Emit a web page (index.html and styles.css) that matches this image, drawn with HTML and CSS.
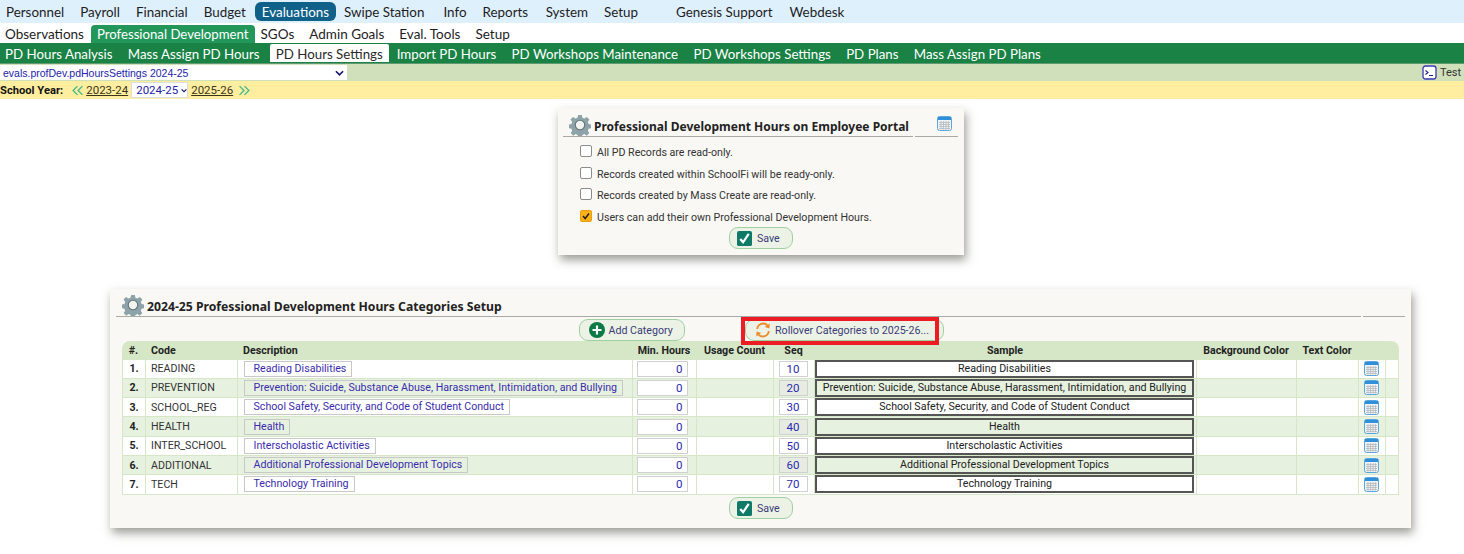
FILE: index.html
```html
<!DOCTYPE html>
<html lang="en">
<head>
<meta charset="utf-8">
<title>PD Hours Settings</title>
<link rel="stylesheet" href="styles.css">
</head>
<body>
<svg class="defs" width="0" height="0">
  <symbol id="gear" viewBox="0 0 24 24">
    <path fill="#8ea3a9" d="M10 1h4l.6 3 2.200.9 2.600-1.700 2.800 2.800-1.700 2.600.9 2.200 3 .6v4l-3 .6-.9 2.200 1.700 2.600-2.800 2.800-2.600-1.700-2.200.9-.6 3h-4l-.6-3-2.200-.9-2.600 1.700-2.800-2.800 1.700-2.600-.9-2.200-3-.6v-4l3-.6.9-2.200L1.600 6l2.800-2.800 2.600 1.700 2.200-.9z"/>
    <circle cx="12" cy="12" r="5.200" fill="#f3f3ef" stroke="#66777c" stroke-width="1.300"/>
  </symbol>
  <symbol id="cal" viewBox="0 0 15 15">
    <rect x=".5" y=".5" width="14" height="14" rx="2" fill="#eef3f6" stroke="#5aa5dc"/>
    <path fill="#2f8fd8" d="M1 1h13v3H1z"/>
    <path stroke="#b5b9bc" stroke-width=".8" fill="none" d="M2 6.500h11M2 8.500h11M2 10.500h11M2 12.500h11M4 5v8.500M6.500 5v8.500M9 5v8.500M11.500 5v8.500"/>
  </symbol>
  <symbol id="check" viewBox="0 0 16 16">
    <rect width="16" height="16" rx="2" fill="#0f7a68"/>
    <path d="M3.500 8.500l3 3.500 6-9" fill="none" stroke="#fff" stroke-width="2.400"/>
  </symbol>
  <symbol id="dbl-left" viewBox="0 0 10 10">
    <path d="M5 1L1 5l4 4M9.500 1l-4 4 4 4" fill="none" stroke="#41b88c" stroke-width="1.200"/>
  </symbol>
  <symbol id="dbl-right" viewBox="0 0 10 10">
    <path d="M.5 1l4 4-4 4M5 1l4 4-4 4" fill="none" stroke="#41b88c" stroke-width="1.200"/>
  </symbol>
</svg>

<nav class="bar bar-top">
  <a class="item">Personnel</a><a class="item">Payroll</a><a class="item">Financial</a><a class="item">Budget</a><a class="item item-on">Evaluations</a><a class="item">Swipe Station</a><a class="item">Info</a><a class="item">Reports</a><a class="item">System</a><a class="item">Setup</a><a class="item item-far">Genesis Support</a><a class="item">Webdesk</a>
</nav>
<nav class="bar bar-sub">
  <a class="sub">Observations</a><a class="sub sub-on">Professional Development</a><a class="sub">SGOs</a><a class="sub">Admin Goals</a><a class="sub">Eval. Tools</a><a class="sub">Setup</a>
</nav>
<nav class="bar bar-tabs">
  <a class="tab">PD Hours Analysis</a><a class="tab">Mass Assign PD Hours</a><a class="tab tab-on">PD Hours Settings</a><a class="tab">Import PD Hours</a><a class="tab">PD Workshops Maintenance</a><a class="tab">PD Workshops Settings</a><a class="tab">PD Plans</a><a class="tab">Mass Assign PD Plans</a>
</nav>
<div class="bar bar-view">
  <div class="view-select"><span>evals.profDev.pdHoursSettings 2024-25</span><svg class="chev" viewBox="0 0 10 6" width="9" height="6"><path d="M1 1l4 4 4-4" fill="none" stroke="#14146e" stroke-width="1.800"/></svg></div>
  <div class="test">
    <svg viewBox="0 0 15 15" width="15" height="15"><rect x="1" y="1" width="13" height="13" rx="2.500" fill="#fff" stroke="#3a3ab4" stroke-width="1.300"/><path d="M3.500 5.500l2.500 2-2.500 2M7 10.500h4" fill="none" stroke="#22227e" stroke-width="1.100"/></svg>
    <span>Test</span>
  </div>
</div>
<div class="bar bar-year">
  <b class="year-label">School Year:</b>
  <svg class="arrows"><use href="#dbl-left"/></svg>
  <a class="year-link">2023-24</a>
  <div class="year-select"><span>2024-25</span><svg class="chev" viewBox="0 0 10 6" width="8" height="5"><path d="M1 1l4 4 4-4" fill="none" stroke="#14146e" stroke-width="1.800"/></svg></div>
  <a class="year-link">2025-26</a>
  <svg class="arrows arrows-next"><use href="#dbl-right"/></svg>
</div>

<main class="page">
  <section class="panel panel-portal">
    <header class="panel-head">
      <div class="head-main"><svg class="gear"><use href="#gear"/></svg><h2>Professional Development Hours on Employee Portal</h2></div>
      <div class="head-side"><svg class="cal-head"><use href="#cal"/></svg></div>
    </header>
    <ul class="opts">
      <li><span class="box"></span>All PD Records are read-only.</li>
      <li><span class="box"></span>Records created within SchoolFi will be ready-only.</li>
      <li><span class="box"></span>Records created by Mass Create are read-only.</li>
      <li><span class="box box-on"><svg viewBox="0 0 12 12" width="12" height="12"><path d="M3 6l2.200 2.500L9 3.500" fill="none" stroke="#222" stroke-width="1.500"/></svg></span>Users can add their own Professional Development Hours.</li>
    </ul>
    <div class="actions"><button class="btn btn-save"><svg class="ico"><use href="#check"/></svg>Save</button></div>
  </section>

  <section class="panel panel-cats">
    <header class="panel-head">
      <div class="head-main"><svg class="gear"><use href="#gear"/></svg><h2>2024-25 Professional Development Hours Categories Setup</h2></div>
      <div class="head-side"></div>
    </header>
    <div class="tools">
      <button class="btn btn-add"><svg class="ico" viewBox="0 0 16 16"><circle cx="8" cy="8" r="8" fill="#0c7a45"/><path d="M8 3.500v9M3.500 8h9" stroke="#fff" stroke-width="2.200"/></svg>Add Category</button>
      <button class="btn btn-roll"><svg class="ico ico-roll" viewBox="0 0 16 16"><path d="M2.200 7A6 6 0 0 1 12.500 3.400" fill="none" stroke="#ee8a2a" stroke-width="1.900"/><path d="M14.800 1.500l-.4 5-4.600-1.600z" fill="#ee8a2a"/><path d="M13.800 9A6 6 0 0 1 3.500 12.600" fill="none" stroke="#ee8a2a" stroke-width="1.900"/><path d="M1.200 14.500l.4-5 4.600 1.600z" fill="#ee8a2a"/></svg>Rollover Categories to 2025-26...<span class="mark"></span></button>
    </div>
    <table class="grid">
      <colgroup><col class="c1"><col class="c2"><col class="c3"><col class="c4"><col class="c5"><col class="c6"><col class="c7"><col class="c8"><col class="c9"><col class="c10"><col class="c11"></colgroup>
      <thead>
        <tr><th class="num">#.</th><th>Code</th><th>Description</th><th class="mid">Min. Hours</th><th class="mid">Usage Count</th><th class="mid">Seq</th><th class="mid">Sample</th><th class="mid">Background Color</th><th class="mid">Text Color</th><th></th><th></th></tr>
      </thead>
      <tbody>
        <tr><td class="num">1.</td><td>READING</td><td><a class="desc">Reading Disabilities</a></td><td><span class="inp inp-hours">0</span></td><td></td><td><span class="inp inp-seq">10</span></td><td><div class="sample">Reading Disabilities</div></td><td></td><td></td><td class="mid"><svg class="cal"><use href="#cal"/></svg></td><td></td></tr>
        <tr><td class="num">2.</td><td>PREVENTION</td><td><a class="desc">Prevention: Suicide, Substance Abuse, Harassment, Intimidation, and Bullying</a></td><td><span class="inp inp-hours">0</span></td><td></td><td><span class="inp inp-seq">20</span></td><td><div class="sample">Prevention: Suicide, Substance Abuse, Harassment, Intimidation, and Bullying</div></td><td></td><td></td><td class="mid"><svg class="cal"><use href="#cal"/></svg></td><td></td></tr>
        <tr><td class="num">3.</td><td>SCHOOL_REG</td><td><a class="desc">School Safety, Security, and Code of Student Conduct</a></td><td><span class="inp inp-hours">0</span></td><td></td><td><span class="inp inp-seq">30</span></td><td><div class="sample">School Safety, Security, and Code of Student Conduct</div></td><td></td><td></td><td class="mid"><svg class="cal"><use href="#cal"/></svg></td><td></td></tr>
        <tr><td class="num">4.</td><td>HEALTH</td><td><a class="desc">Health</a></td><td><span class="inp inp-hours">0</span></td><td></td><td><span class="inp inp-seq">40</span></td><td><div class="sample">Health</div></td><td></td><td></td><td class="mid"><svg class="cal"><use href="#cal"/></svg></td><td></td></tr>
        <tr><td class="num">5.</td><td>INTER_SCHOOL</td><td><a class="desc">Interscholastic Activities</a></td><td><span class="inp inp-hours">0</span></td><td></td><td><span class="inp inp-seq">50</span></td><td><div class="sample">Interscholastic Activities</div></td><td></td><td></td><td class="mid"><svg class="cal"><use href="#cal"/></svg></td><td></td></tr>
        <tr><td class="num">6.</td><td>ADDITIONAL</td><td><a class="desc">Additional Professional Development Topics</a></td><td><span class="inp inp-hours">0</span></td><td></td><td><span class="inp inp-seq">60</span></td><td><div class="sample">Additional Professional Development Topics</div></td><td></td><td></td><td class="mid"><svg class="cal"><use href="#cal"/></svg></td><td></td></tr>
        <tr><td class="num">7.</td><td>TECH</td><td><a class="desc">Technology Training</a></td><td><span class="inp inp-hours">0</span></td><td></td><td><span class="inp inp-seq">70</span></td><td><div class="sample">Technology Training</div></td><td></td><td></td><td class="mid"><svg class="cal"><use href="#cal"/></svg></td><td></td></tr>
      </tbody>
    </table>
    <div class="actions actions-cats"><button class="btn btn-save"><svg class="ico"><use href="#check"/></svg>Save</button></div>
  </section>
</main>
</body>
</html>
```
FILE: styles.css
```css
* { box-sizing: border-box; }
html, body { margin: 0; padding: 0; background: #fff; overflow: hidden; }
body { width: 1464px; height: 554px; font-family: "Roboto", "Liberation Sans", sans-serif; color: #222; font-size: 10.650px; }
.defs { position: absolute; }
h2 { margin: 0; }
a { display: inline-block; }

.bar { display: flex; align-items: center; white-space: nowrap; }

.bar-top { height: 23px; background: #dff0fd; font-family: "Lato", sans-serif; font-size: 13.400px; color: #1d1d1d; }
.item { padding: 0 6px; margin-right: 4px; line-height: 20px; height: 19px; }
.item:nth-child(6) { margin-right: 7px; }
.item:nth-child(8) { margin-right: 5.500px; }
.item:nth-child(11) { margin-right: 5px; }
.item-on { background: #0f6189; color: #fff; border-radius: 6px; padding: 0 7px; margin-right: 2px; margin-left: -1px; }
.item-far { margin-left: 22px; }

.bar-sub { height: 20px; font-family: "Lato", sans-serif; font-size: 13.500px; color: #1d1d1d; align-items: flex-end; }
.sub { padding: 0 5px; margin-right: 5px; height: 18px; line-height: 18px; }
.sub:first-child { margin-right: 2px; }
.sub-on { background: #23975a; color: #fff; border-radius: 4px 4px 0 0; padding: 0 6px; margin-right: 1px; font-size: 13.200px; }

.bar-tabs { height: 21px; background: #1a8245; color: #fff; font-family: "Lato", sans-serif; font-size: 13.300px; align-items: flex-end; padding-bottom: 1px; border-bottom: 1px solid #5f9a70; }
.tab { padding: 0 5px; margin-right: 5.300px; height: 18px; line-height: 20px; }
.tab-on { background: #fff; color: #2a2a2a; border-radius: 2px 2px 0 0; padding: 0 6px; margin-right: 3px; }

.bar-view { height: 17px; background: #cfe0bb; justify-content: space-between; overflow: hidden; }
.view-select { width: 347px; height: 15px; background: #fff; display: flex; align-items: center; justify-content: space-between; padding: 0 3px; color: #2222aa; font-family: "Liberation Sans", sans-serif; font-size: 10.500px; }
.test { width: 42px; flex: none; display: flex; align-items: center; gap: 3px; color: #333; font-size: 11px; }
.test svg { flex: none; }

.bar-year { height: 18px; background: #ffee9f; gap: 3px; font-size: 11.500px; }
.year-label { color: #111; margin-right: 6px; font-size: 11.200px; }
.arrows { width: 11px; height: 11px; }
.arrows-next { margin-left: 3px; }
.year-link { color: #3a3418; text-decoration: underline; }
.year-select { width: 57px; height: 16px; background: #fff; border: 1px solid #ddd; display: flex; align-items: center; gap: 3px; padding-left: 4px; color: #2222aa; }

.page { display: flex; flex-direction: column; align-items: flex-start; }
.panel { background: #f9f8f4; box-shadow: 2px 5px 9px rgba(60, 60, 50, .5); }

.panel-head { display: flex; align-items: flex-end; gap: 2px; }
.head-main { flex: 1; display: flex; align-items: flex-end; gap: 3px; border-bottom: 1px solid #a9a9a5; height: 24px; }
.head-side { border-bottom: 1px solid #a9a9a5; height: 24px; display: flex; align-items: center; justify-content: flex-end; }
.gear { width: 22px; height: 22px; margin-left: 6px; flex: none; }
h2 { font-family: "Noto Sans", sans-serif; font-size: 12px; font-weight: 700; color: #222; white-space: nowrap; margin-bottom: 1px; }
.panel-cats h2 { font-size: 12.200px; }

.panel-portal { margin: 9px 0 0 558px; width: 406px; height: 147px; padding: 5px 6px 0 5px; }
.panel-portal .head-side { width: 43px; }
.cal-head { width: 15px; height: 15px; margin-right: 6px; margin-top: -3px; }
.opts { list-style: none; margin: 5px 0 0; padding: 0 0 0 17px; }
.opts li { height: 21.500px; display: flex; align-items: center; gap: 5px; color: #333; }
.box { width: 12px; height: 12px; border: 1px solid #8c8c8c; border-radius: 2px; background: #fff; margin-top: -3px; flex: none; }
.box-on { background: #fbb117; border-color: #e8a010; display: flex; }
.box-on svg { margin: -1px; }
.actions { display: flex; justify-content: center; margin-top: -1px; }

.btn { display: inline-flex; align-items: center; height: 22px; padding: 0 10px; border: 1.500px solid #9fd1a0; border-radius: 9px; background: #ecf3e6; font: inherit; color: #3b3b78; white-space: nowrap; }
.ico { width: 16px; height: 16px; margin-right: 4px; flex: none; }
.btn-save { width: 64px; padding-left: 7.500px; }
.btn-save .ico { width: 15px; height: 15px; margin-right: 5px; }
.btn-add { width: 106px; padding-left: 8.500px; }
.btn-roll { position: relative; width: 199px; padding-left: 9px; }
.mark { position: absolute; left: -5px; top: -3.500px; width: 198px; height: 28px; border: 4px solid #ed1c24; }

.panel-cats { margin: 34px 0 0 110px; width: 1301px; height: 239px; padding: 4px 6px 0 6px; }
.panel-cats .head-side { width: 42px; }
.tools { display: flex; margin-left: 463px; gap: 60px; margin-top: 2px; height: 22px; }
.grid { margin-left: 6px; width: 1277px; border-collapse: separate; border-spacing: 0; table-layout: fixed; border-top-left-radius: 8px; border-top-right-radius: 8px; overflow: hidden; color: #333; }
.c1 { width: 23px; } .c2 { width: 92px; } .c3 { width: 395px; } .c4 { width: 64px; } .c5 { width: 77px; } .c6 { width: 41px; } .c7 { width: 382px; } .c8 { width: 100px; } .c9 { width: 62px; } .c10 { width: 27px; } .c11 { width: 14px; }
.grid th { height: 18.500px; background: #d6e7c8; text-align: left; padding: 0 0 0 6px; font-weight: 700; color: #222; }
.grid th.mid { text-align: center; padding: 0; }
.grid td { height: 19.300px; padding: 0 0 0 5px; border-left: 1.500px solid #d6e7c8; border-bottom: 1.500px solid #d6e7c8; background: #fff; white-space: nowrap; overflow: hidden; }
.grid td:last-child { border-right: 1.500px solid #d6e7c8; }
.grid tbody tr:nth-child(even) td { background: #e7f1e0; }
.grid td.num, .grid th.num { text-align: center; padding: 0; font-weight: 700; color: #222; }
.grid td.mid { text-align: center; padding: 0 2px 0 0; line-height: 0; }
.desc { margin-left: 1px; border: 1px solid #c8c8c8; background: #fff; color: #3a2cae; padding: 0 5px 0 8.500px; height: 16px; line-height: 14px; }
.grid tbody tr:nth-child(even) .desc { background: #e7f1e0; }
.inp { display: block; border: 1px solid #d0d0d0; background: #fff; color: #2a2ab0; text-align: right; height: 16px; line-height: 15px; font-size: 11.500px; }
.grid tbody tr:nth-child(even) .inp-seq { background: #e7ece2; }
.inp-hours { width: 51px; padding-right: 4px; margin-left: -1.500px; }
.inp-seq { width: 29px; text-align: center; margin-left: -.5px; }
.sample { border: 2px solid #555; height: 18px; line-height: 14px; text-align: center; margin: 0 0 0 -5px; width: 379px; color: #222; }
.cal { width: 15px; height: 15px; }
.actions-cats { margin-top: 2.500px; }
```
